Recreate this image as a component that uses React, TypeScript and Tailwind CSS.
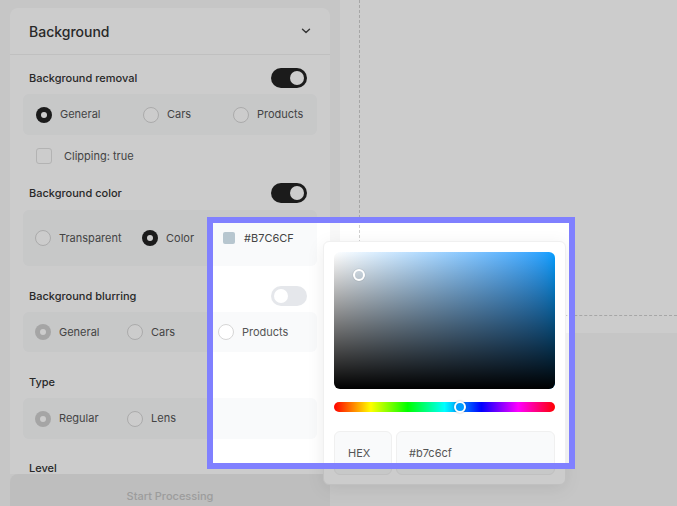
import React from 'react';

const Toggle = ({ on }: { on: boolean }) => (
  <div className={`w-9 h-5 rounded-full flex items-center px-[3px] ${on ? 'bg-[#222222] justify-end' : 'bg-[#e5e7eb] justify-start'}`}>
    <div className="w-[14px] h-[14px] rounded-full bg-white" />
  </div>
);

const Radio = ({ state }: { state: 'on' | 'off' | 'dim' }) => {
  if (state === 'off') return <div className="w-4 h-4 rounded-full bg-white border border-[#d6d6d6] shrink-0" />;
  return (
    <div className={`w-4 h-4 rounded-full flex items-center justify-center shrink-0 ${state === 'on' ? 'bg-[#222222]' : 'bg-[#cfcfcf]'}`}>
      <div className="w-1.5 h-1.5 rounded-full bg-white" />
    </div>
  );
};

const Option = ({ label, state, w }: { label: string; state: 'on' | 'off' | 'dim'; w: string }) => (
  <div className={`flex items-center gap-2 ${w}`}>
    <Radio state={state} />
    <span className="text-[11px] text-[#555555]">{label}</span>
  </div>
);

const Label = ({ text, toggle }: { text: string; toggle?: boolean }) => (
  <div className="h-5 flex items-center justify-between pl-1.5 pr-2.5">
    <span className="text-[11px] font-medium text-[#333333]">{text}</span>
    {toggle !== undefined && <Toggle on={toggle} />}
  </div>
);

const Sidebar = () => (
  <aside className="w-[340px] h-[506px] shrink-0 flex flex-col bg-[#f8f8f8]">
    <div className="h-[474px] shrink-0 overflow-hidden pt-2 px-2.5">
      <div className="bg-white rounded-lg">
        <div className="h-[47px] flex items-center justify-between pl-[19px] pr-[19px] border-b border-[#f0f0f0]">
          <span className="text-[14px] font-medium text-[#333333]">Background</span>
          <svg width="10" height="6" viewBox="0 0 10 6" fill="none" stroke="#444" strokeWidth="1.4" strokeLinecap="round" strokeLinejoin="round">
            <path d="M1.5 1.2l3.5 3.4 3.5-3.4" />
          </svg>
        </div>

        <div className="px-[13px] pt-[13px] pb-10">
          <Label text="Background removal" toggle={true} />
          <div className="mt-1.5 h-[41px] rounded-md bg-[#f9fafb] flex items-center pl-[13px]">
            <Option label="General" state="on" w="w-[107px]" />
            <Option label="Cars" state="off" w="w-[90px]" />
            <Option label="Products" state="off" w="w-[80px]" />
          </div>

          <div className="mt-[13px] h-4 flex items-center pl-[13px] gap-3">
            <div className="w-4 h-4 rounded-[3px] border border-[#e0e0e0] bg-white" />
            <span className="text-[11px] text-[#555555]">Clipping: true</span>
          </div>

          <div className="mt-[19px]">
            <Label text="Background color" toggle={true} />
          </div>
          <div className="mt-[7px] h-[56px] rounded-md bg-[#f9fafb] flex items-center pl-3">
            <Option label="Transparent" state="off" w="w-[107px]" />
            <Option label="Color" state="on" w="w-[81px]" />
            <div className="flex items-center gap-[9px]">
              <div className="w-3 h-3 rounded-[2px] bg-[#B7C6CF]" />
              <span className="text-[11px] text-[#444444]">#B7C6CF</span>
            </div>
          </div>

          <div className="mt-5">
            <Label text="Background blurring" toggle={false} />
          </div>
          <div className="mt-1.5 h-10 rounded-md bg-[#f9fafb] flex items-center pl-3">
            <Option label="General" state="dim" w="w-[92px]" />
            <Option label="Cars" state="off" w="w-[91px]" />
            <Option label="Products" state="off" w="w-[80px]" />
          </div>

          <div className="mt-5">
            <Label text="Type" />
          </div>
          <div className="mt-1.5 h-[41px] rounded-md bg-[#f9fafb] flex items-center pl-3">
            <Option label="Regular" state="dim" w="w-[92px]" />
            <Option label="Lens" state="off" w="w-[91px]" />
          </div>

          <div className="mt-[19px]">
            <Label text="Level" />
          </div>
          <div className="mt-1.5 h-10 rounded-md bg-[#f9fafb]" />
        </div>
      </div>
    </div>
    <div className="px-2.5 shrink-0">
      <button className="w-full h-11 rounded-t-lg bg-[#eeeeee] text-[11px] font-medium text-[#c4c4c4]">
        Start Processing
      </button>
    </div>
  </aside>
);

const ColorPicker = () => (
  <div className="absolute left-[323px] top-[241px] w-[243px] bg-white rounded-md border border-[#f0f0f0] shadow-[0_4px_18px_rgba(0,0,0,0.08)] px-2.5 pt-2.5 pb-[9px] z-10">
    <div className="relative h-[137px] rounded-md overflow-hidden bg-linear-to-r from-white to-[#009dff]">
      <div className="absolute inset-0 bg-linear-to-t from-black to-transparent" />
      <div className="absolute left-[19px] top-[17px] w-3 h-3 rounded-full border-2 border-white shadow-[0_0_1px_rgba(0,0,0,0.4)]" />
    </div>
    <div className="relative mt-[13px] h-2.5 rounded-full bg-[linear-gradient(to_right,#ff0000,#ffff00,#00ff00,#00ffff,#0000ff,#ff00ff,#ff0000)]">
      <div className="absolute left-[120px] -top-px w-3 h-3 rounded-full bg-[#009dff] border-2 border-white shadow-[0_0_2px_rgba(0,0,0,0.3)]" />
    </div>
    <div className="mt-[19px] flex gap-1 h-11">
      <div className="w-[58px] rounded-md border border-[#f0f0f0] bg-[#f9fafb] flex items-center pl-[13px] text-[11px] text-[#555555]">HEX</div>
      <div className="flex-1 rounded-md border border-[#f0f0f0] bg-[#f9fafb] flex items-center pl-3 text-[11px] text-[#555555]">#b7c6cf</div>
    </div>
  </div>
);

export default function App() {
  return (
    <div className="relative w-[677px] h-[506px] overflow-hidden flex font-['Inter',sans-serif] bg-[#f8f8f8]">
      <Sidebar />
      <div className="flex-1 flex flex-col">
        <div className="relative h-[333px] bg-white">
          <div className="absolute left-[19px] top-0 bottom-0 border-l border-dashed border-[#d0d0d0]" />
          <div className="absolute top-[315px] left-0 right-0 border-t border-dashed border-[#d0d0d0]" />
        </div>
      </div>
      <ColorPicker />
      <div className="absolute left-[207px] top-[217px] w-[368px] h-[252px] border-[6px] border-[#8080ff] shadow-[0_0_0_9999px_rgba(0,0,0,0.2)] z-20 pointer-events-none" />
    </div>
  );
}
